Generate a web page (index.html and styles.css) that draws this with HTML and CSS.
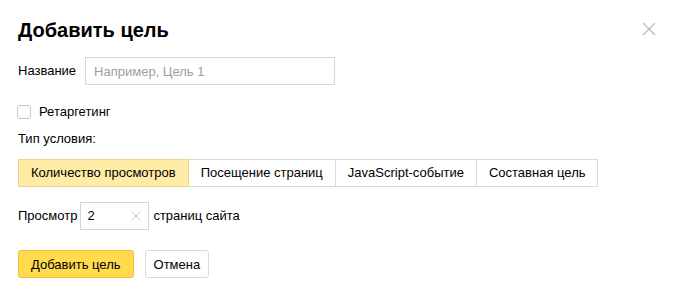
FILE: index.html
```html
<!DOCTYPE html>
<html lang="ru">
  <head>
    <meta charset="UTF-8" />
    <title>Добавить цель</title>
    <link rel="stylesheet" href="styles.css">
  </head>
  <body>
    <div class="dialog">
      <div class="header">
        <h1>Добавить цель</h1>
        <span class="close">
          <svg width="14" height="14" viewBox="0 0 14 14">
            <path d="M1 1L13 13M13 1L1 13" stroke="#bdbdbd" stroke-width="1.3" fill="none" />
          </svg>
        </span>
      </div>

      <div class="row name-row">
        <label class="label">Название</label>
        <input class="input name-input" type="text" placeholder="Например, Цель 1" />
      </div>

      <label class="check-row">
        <span class="checkbox"></span>
        <span>Ретаргетинг</span>
      </label>

      <div class="type-label">Тип условия:</div>

      <div class="tabs">
        <span class="tab active">Количество просмотров</span>
        <span class="tab">Посещение страниц</span>
        <span class="tab">JavaScript-событие</span>
        <span class="tab">Составная цель</span>
      </div>

      <div class="row count-row">
        <span>Просмотр</span>
        <span class="count-box">
          <span class="count-value">2</span>
          <svg width="10" height="10" viewBox="0 0 10 10">
            <path d="M0.5 0.5L9.5 9.5M9.5 0.5L0.5 9.5" stroke="#cfcfcf" stroke-width="1" fill="none" />
          </svg>
        </span>
        <span>страниц сайта</span>
      </div>

      <div class="actions">
        <button class="btn btn-primary">Добавить цель</button>
        <button class="btn">Отмена</button>
      </div>
    </div>
  </body>
</html>
```

FILE: styles.css
```css
body {
  margin: 0;
  background: #fff;
  font-family: "Liberation Sans", Arial, sans-serif;
  font-size: 13px;
  line-height: 16px;
  color: #000;
}
.dialog {
  padding: 18px 20px 0 18px;
  display: flex;
  flex-direction: column;
  align-items: flex-start;
}
.header {
  display: flex;
  justify-content: space-between;
  align-items: center;
  align-self: stretch;
  height: 24px;
}
h1 {
  margin: 0;
  font-size: 20px;
  line-height: 24px;
  font-weight: bold;
}
.close {
  display: flex;
  margin-top: -3px;
}
.row {
  display: flex;
  align-items: center;
}
.name-row {
  margin-top: 15px;
}
.label {
  margin-right: 9px;
}
.input {
  box-sizing: border-box;
  height: 28px;
  border: 1px solid #d6d6d6;
  padding: 0 8px;
  font-family: inherit;
  font-size: 13px;
  outline: none;
}
.input::placeholder {
  color: #9e9e9e;
}
.name-input {
  width: 250px;
}
.check-row {
  margin-top: 19px;
  display: flex;
  align-items: center;
  height: 16px;
}
.checkbox {
  box-sizing: border-box;
  width: 14px;
  height: 14px;
  border: 1px solid #c8c8c8;
  border-radius: 3px;
  margin-right: 8px;
  margin-left: -1px;
}
.type-label {
  margin-top: 11px;
}
.tabs {
  margin-top: 12px;
  display: flex;
}
.tab {
  box-sizing: border-box;
  height: 28px;
  display: flex;
  align-items: center;
  padding: 0 12px;
  border: 1px solid #d9d9d9;
  margin-left: -1px;
}
.tab:first-child {
  margin-left: 0;
}
.tab:last-child {
  padding-right: 11px;
}
.tab.active {
  background: #feeba5;
  border-color: #ecd58b;
  position: relative;
}
.count-row {
  margin-top: 15px;
}
.count-box {
  box-sizing: border-box;
  width: 69px;
  height: 28px;
  border: 1px solid #d6d6d6;
  margin: 0 4px 0 3px;
  display: flex;
  align-items: center;
  justify-content: space-between;
  padding: 0 7px 0 6px;
}
.actions {
  margin-top: 20px;
  display: flex;
  gap: 11px;
}
.btn {
  box-sizing: border-box;
  height: 28px;
  padding: 0 8px;
  border: 1px solid #d9d9d9;
  border-radius: 3px;
  background: #fff;
  font-family: inherit;
  font-size: 13px;
  color: #000;
  cursor: pointer;
}
.btn-primary {
  background: #ffdb4d;
  border-color: #eac23a;
  padding: 0 12px;
}
```
